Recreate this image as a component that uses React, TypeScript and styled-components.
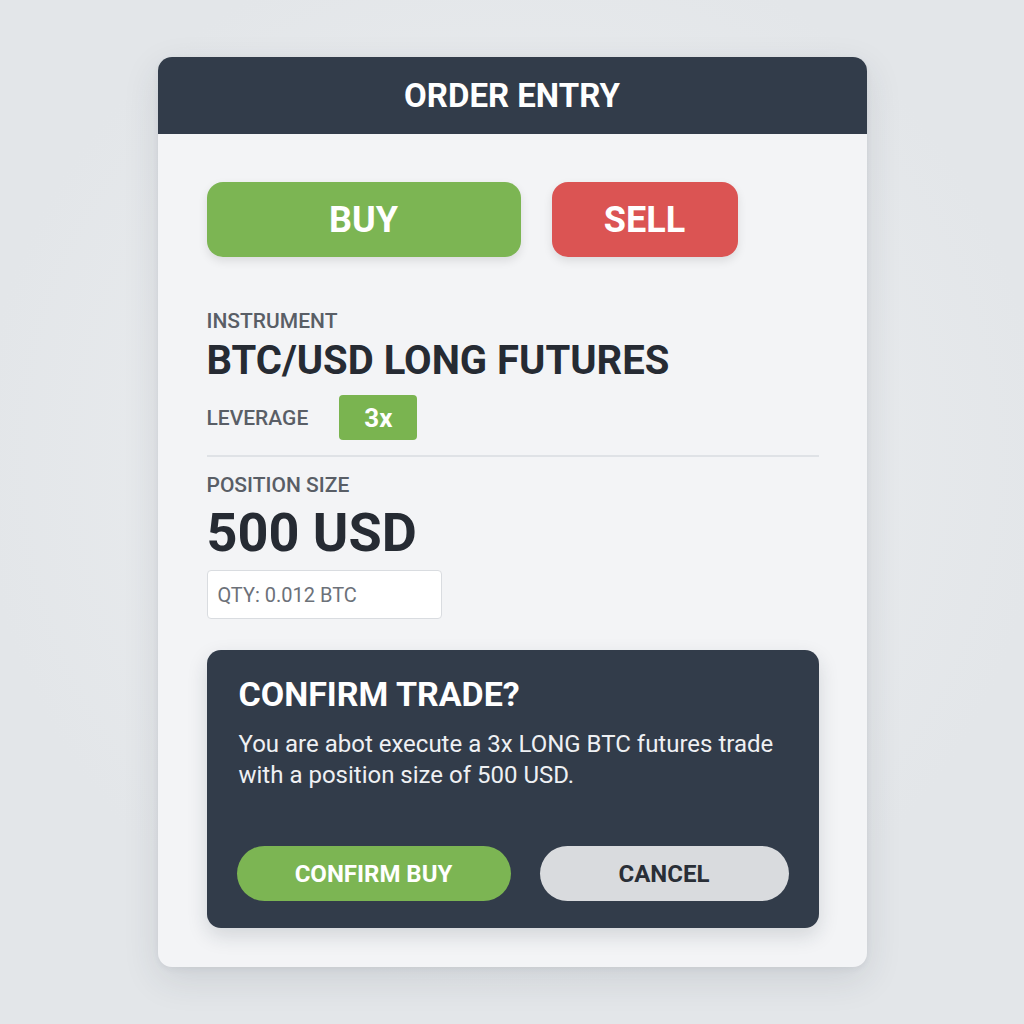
import React from 'react'
import styled, { createGlobalStyle } from 'styled-components'

const GlobalStyle = createGlobalStyle`
  html, body {
    margin: 0;
    padding: 0;
    background: #e4e7ea;
    font-family: Roboto, 'Liberation Sans', sans-serif;
  }
`

const Page = styled.div`
  width: 1024px;
  height: 1024px;
  display: flex;
  align-items: center;
  justify-content: center;
  background: radial-gradient(circle at 50% 45%, #eef0f2 0%, #e3e6e9 70%);
`

const Card = styled.div`
  width: 709px;
  height: 910px;
  background: #f3f4f6;
  border-radius: 14px;
  overflow: hidden;
  box-shadow: 0 12px 36px rgba(40, 50, 65, 0.12), 0 2px 6px rgba(40, 50, 65, 0.06);
  display: flex;
  flex-direction: column;
`

const Header = styled.div`
  height: 77px;
  background: #323c4a;
  display: flex;
  align-items: center;
  justify-content: center;
  color: #ffffff;
  font-size: 33px;
  font-weight: 700;
`

const Body = styled.div`
  padding: 48px 48px 0 49px;
  display: flex;
  flex-direction: column;
`

const SideRow = styled.div`
  display: flex;
  gap: 31px;
`

const SideButton = styled.button<{ $color: string; $width: number }>`
  width: ${(p) => p.$width}px;
  height: 75px;
  border: none;
  border-radius: 16px;
  background: ${(p) => p.$color};
  color: #ffffff;
  font-family: inherit;
  font-size: 36px;
  font-weight: 700;
  box-shadow: 0 4px 10px rgba(0, 0, 0, 0.1);
`

const Label = styled.div<{ $mt?: number }>`
  margin-top: ${(p) => p.$mt ?? 0}px;
  font-size: 21px;
  font-weight: 500;
  color: #595e66;
  line-height: 24px;
`

const Instrument = styled.div`
  margin-top: 6px;
  font-size: 40px;
  font-weight: 700;
  color: #262b33;
  line-height: 44px;
`

const LeverageRow = styled.div`
  margin-top: 12px;
  display: flex;
  align-items: center;
  gap: 31px;
`

const Badge = styled.div`
  width: 78px;
  height: 45px;
  border-radius: 4px;
  background: #7ab450;
  color: #ffffff;
  font-size: 26px;
  font-weight: 700;
  display: flex;
  align-items: center;
  justify-content: center;
`

const Divider = styled.div`
  margin-top: 15px;
  height: 2px;
  background: #dfe2e6;
`

const Amount = styled.div`
  margin-top: 4px;
  font-size: 54px;
  font-weight: 700;
  color: #262b33;
  line-height: 64px;
`

const QtyBox = styled.div`
  margin-top: 5px;
  width: 235px;
  height: 49px;
  box-sizing: border-box;
  border: 1.5px solid #d9dce0;
  border-radius: 4px;
  background: #ffffff;
  padding-left: 10px;
  display: flex;
  align-items: center;
  color: #6c7179;
  font-size: 20px;
`

const Confirm = styled.div`
  margin-top: 31px;
  height: 278px;
  box-sizing: border-box;
  background: #323c4a;
  border-radius: 14px;
  padding: 25px 30px 27px 32px;
  display: flex;
  flex-direction: column;
  box-shadow: 0 8px 20px rgba(30, 40, 55, 0.15);
`

const ConfirmTitle = styled.div`
  font-size: 34px;
  font-weight: 700;
  color: #ffffff;
  line-height: 38px;
`

const ConfirmText = styled.div`
  margin-top: 16px;
  font-size: 24px;
  line-height: 31px;
  color: #eef0f3;
`

const ActionRow = styled.div`
  margin-top: auto;
  display: flex;
  gap: 29px;
  margin-left: -2px;
`

const ActionButton = styled.button<{ $bg: string; $fg: string; $width: number }>`
  width: ${(p) => p.$width}px;
  height: 55px;
  border: none;
  border-radius: 28px;
  background: ${(p) => p.$bg};
  color: ${(p) => p.$fg};
  font-family: inherit;
  font-size: 24px;
  font-weight: 700;
`

export default function App() {
  return (
    <Page>
      <GlobalStyle />
      <Card>
        <Header>ORDER ENTRY</Header>
        <Body>
          <SideRow>
            <SideButton $color='#7cb553' $width={314}>
              BUY
            </SideButton>
            <SideButton $color='#db5453' $width={186}>
              SELL
            </SideButton>
          </SideRow>

          <Label $mt={52}>INSTRUMENT</Label>
          <Instrument>BTC/USD LONG FUTURES</Instrument>
          <LeverageRow>
            <Label>LEVERAGE</Label>
            <Badge>3x</Badge>
          </LeverageRow>
          <Divider />

          <Label $mt={16}>POSITION SIZE</Label>
          <Amount>500 USD</Amount>
          <QtyBox>QTY: 0.012 BTC</QtyBox>

          <Confirm>
            <ConfirmTitle>CONFIRM TRADE?</ConfirmTitle>
            <ConfirmText>
              You are abot execute a 3x LONG BTC futures trade
              <br />
              with a position size of 500 USD.
            </ConfirmText>
            <ActionRow>
              <ActionButton $bg='#7cb553' $fg='#ffffff' $width={274}>
                CONFIRM BUY
              </ActionButton>
              <ActionButton $bg='#d9dbde' $fg='#2a2f37' $width={249}>
                CANCEL
              </ActionButton>
            </ActionRow>
          </Confirm>
        </Body>
      </Card>
    </Page>
  )
}
